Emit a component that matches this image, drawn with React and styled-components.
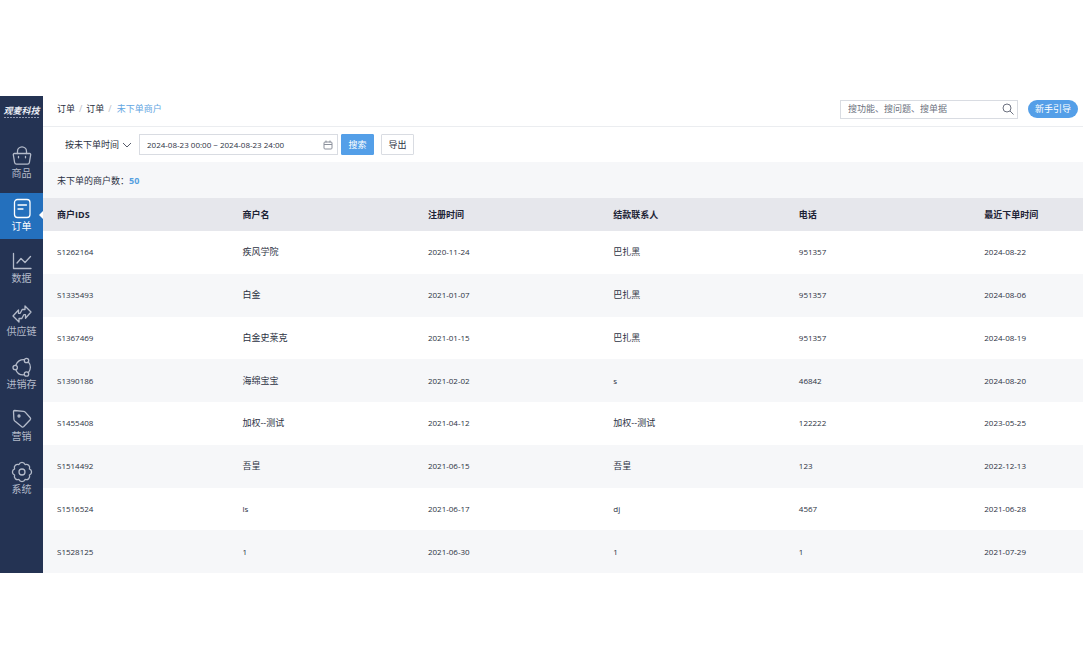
import React, { useState } from 'react';
import styled, { createGlobalStyle } from 'styled-components';

const GlobalStyle = createGlobalStyle`
  * {
    box-sizing: border-box;
  }
  body {
    margin: 0;
    background: #fff;
    color: #2b3142;
    font-family: "Open Sans", "Noto Sans CJK SC", sans-serif;
    font-size: 9px;
    line-height: 12px;
  }
  button, input, select {
    font: inherit;
    color: inherit;
  }
`;

const Page = styled.div`
  display: flex;
  margin: 96px 0;
`;

const Sidebar = styled.aside`
  display: flex;
  flex-direction: column;
  flex: 0 0 43px;
  background: #243353;
`;

const Logo = styled.a`
  height: 44px;
  padding-top: 9px;
  color: #e9ecf4;
  text-align: center;
  text-decoration: none;
  font-size: 9px;
  font-style: italic;
  font-weight: 700;
  white-space: nowrap;
`;

const Tagline = styled.svg`
  display: block;
  width: 35px;
  height: 2px;
  margin: 0 auto;
`;

const Nav = styled.nav`
  display: flex;
  flex: 1;
  flex-direction: column;
  justify-content: space-between;
  padding-bottom: 71px;
`;

const NavItem = styled.a`
  position: relative;
  display: flex;
  flex-direction: column;
  align-items: center;
  height: 46px;
  padding-top: 5px;
  background: ${props => props.$active ? '#2470bd' : 'transparent'};
  color: ${props => props.$active ? '#fff' : '#b4bbca'};
  font-size: 10px;
  line-height: 12px;
  text-decoration: none;
  white-space: nowrap;

  svg {
    width: 22px;
    height: 22px;
    fill: none;
    stroke: currentColor;
    stroke-width: 1.3;
    stroke-linecap: round;
    stroke-linejoin: round;
  }

  &::after {
    content: '';
    display: ${props => props.$active ? 'block' : 'none'};
    position: absolute;
    right: 0;
    top: 18px;
    border: 4px solid transparent;
    border-left: 0;
    border-right-color: #fff;
  }
`;

const Main = styled.main`
  flex: 1;
  min-width: 0;
`;

const TopBar = styled.header`
  display: flex;
  align-items: center;
  gap: 10px;
  height: 31px;
  padding: 0 5px 4px 14px;
  border-bottom: 1px solid #ebedf0;
`;

const Breadcrumb = styled.nav`
  display: flex;
  flex: 1;
  gap: 4px;
  color: #b9bdc6;

  a {
    color: #2b3142;
    text-decoration: none;
  }
  a[aria-current] {
    margin-left: 1px;
    color: #63a6e2;
  }
`;

const SearchBox = styled.label`
  display: flex;
  align-items: center;
  width: 178px;
  height: 19px;
  padding: 0 3px 0 7px;
  border: 1px solid #d9dce2;

  input {
    flex: 1;
    min-width: 0;
    padding: 0;
    border: 0;
    outline: 0;
    background: none;
  }
  input::placeholder {
    color: #6d7280;
    opacity: 1;
  }
  svg {
    width: 12px;
    height: 12px;
    fill: none;
    stroke: #6d7280;
  }
`;

const GuideButton = styled.button`
  width: 50px;
  height: 18px;
  padding: 0;
  border: 0;
  border-radius: 9px;
  background: #549fe8;
  color: #fff;
`;

const FilterBar = styled.form`
  display: flex;
  align-items: center;
  gap: 7px;
  height: 35px;
  padding: 0 22px;
`;

const TypeSelect = styled.div`
  display: flex;
  align-items: center;
  width: 67px;

  select {
    flex: 1;
    min-width: 0;
    padding: 0;
    border: 0;
    outline: 0;
    background: none;
    appearance: none;
  }
  svg {
    width: 10px;
    height: 10px;
    margin-left: -10px;
    fill: none;
    stroke: #555b69;
    pointer-events: none;
  }
`;

const DateBox = styled.label`
  display: flex;
  align-items: center;
  width: 199px;
  height: 21px;
  padding: 0 4px 0 7px;
  border: 1px solid #d9dce2;

  input {
    flex: 1;
    min-width: 0;
    padding: 0;
    border: 0;
    outline: 0;
    background: none;
    font-size: 8px;
  }
  svg {
    width: 10px;
    height: 10px;
    fill: none;
    stroke: #8b909b;
  }
`;

const Button = styled.button`
  width: 33px;
  height: 21px;
  padding: 0;
  border: 1px solid ${props => props.$primary ? '#549fe8' : '#d9dce2'};
  border-radius: 1px;
  background: ${props => props.$primary ? '#549fe8' : '#fff'};
  color: ${props => props.$primary ? '#fff' : '#2b3142'};
`;

const Buttons = styled.div`
  display: flex;
  gap: 7px;
  margin-left: -4px;
`;

const Summary = styled.div`
  display: flex;
  align-items: center;
  height: 36px;
  padding: 1px 14px 0;
  background: #f6f7f9;

  strong {
    color: #559fe0;
    font-weight: 700;
  }
`;

const TableScroll = styled.div`
  overflow-x: auto;
  scrollbar-width: none;
`;

const Table = styled.table`
  width: 107%;
  height: 375px;
  table-layout: fixed;
  border-collapse: collapse;

  th, td {
    padding: 0 14px;
    text-align: left;
  }
  th {
    height: 33px;
    background: #e6e7ec;
    color: #1d2335;
    font-weight: 700;
  }
  tbody tr:nth-child(even) {
    background: #f6f7f9;
  }
`;

const Cell = styled.td`
  font-size: ${props => props.$latin ? '8px' : '9px'};
`;

const BagIcon = () => (
  <svg viewBox="0 0 22 22">
    <path d="M3.300 8.500h15.400a1 1 0 0 1 1 1.200l-1.300 7.800a2 2 0 0 1-2 1.700H5.600a2 2 0 0 1-2-1.700L2.300 9.700a1 1 0 0 1 1-1.200z" />
    <path d="M6.500 8.500V6.300a4.500 4.500 0 0 1 9 0v2.200M7.500 11.500v1.300M14.500 11.500v1.300" />
  </svg>
);

const OrderIcon = () => (
  <svg viewBox="0 0 22 22">
    <rect x="3.500" y="1.500" width="15.500" height="18" rx="3" />
    <path d="M7 7h8.500M7 11h5" />
  </svg>
);

const ChartIcon = () => (
  <svg viewBox="0 0 22 22">
    <path d="M2.500 3.500v15h17.500M6 13l4-4.500 4 4L19.500 6.500" />
  </svg>
);

const SupplyIcon = () => (
  <svg viewBox="0 0 22 22">
    <path d="M2 13l5.500-6v3.300h1.700l2-3.800H14V3l6 6-5.500 6.200v-3.500h-1.700l-2 3.800H8V19z" />
  </svg>
);

const StockIcon = () => (
  <svg viewBox="0 0 22 22">
    <circle cx="4.200" cy="11.500" r="2.200" />
    <circle cx="15.500" cy="4.500" r="2.200" />
    <circle cx="15.500" cy="18" r="2.200" />
    <path d="M4.800 9.300a8 8 0 0 1 8.500-5.700M4.800 13.700a8 8 0 0 0 8.500 5M17.300 5.900a8 8 0 0 1 0 10.800" />
  </svg>
);

const TagIcon = () => (
  <svg viewBox="0 0 22 22">
    <path d="M3.500 2.500l9 .800q1 .1 1.700.800l5 5.600q.9 1 0 2l-6.400 6.800q-1 1-2 .2l-7-5.700q-.8-.7-.9-1.700l-.4-7.800q0-1 1-1z" />
    <circle cx="8" cy="8" r="1" />
  </svg>
);

const GearIcon = () => (
  <svg viewBox="0 0 22 22">
    <path d="M18.400 7.900a3.300 3.300 0 0 1 0 6.200a3.300 3.300 0 0 1-4.300 4.300a3.300 3.300 0 0 1-6.200 0a3.300 3.300 0 0 1-4.300-4.300a3.300 3.300 0 0 1 0-6.200a3.300 3.300 0 0 1 4.300-4.300a3.300 3.300 0 0 1 6.200 0a3.300 3.300 0 0 1 4.300 4.300z" />
    <circle cx="11" cy="11" r="3" />
  </svg>
);

const menu = [
  { name: '商品', icon: BagIcon },
  { name: '订单', icon: OrderIcon },
  { name: '数据', icon: ChartIcon },
  { name: '供应链', icon: SupplyIcon },
  { name: '进销存', icon: StockIcon },
  { name: '营销', icon: TagIcon },
  { name: '系统', icon: GearIcon },
];

const columns = ['商户IDS', '商户名', '注册时间', '结款联系人', '电话', '最近下单时间'];

const rows = [
  ['S1262164', '疾风学院', '2020-11-24', '巴扎黑', '951357', '2024-08-22'],
  ['S1335493', '白金', '2021-01-07', '巴扎黑', '951357', '2024-08-06'],
  ['S1367469', '白金史莱克', '2021-01-15', '巴扎黑', '951357', '2024-08-19'],
  ['S1390186', '海绵宝宝', '2021-02-02', 's', '46842', '2024-08-20'],
  ['S1455408', '加权--测试', '2021-04-12', '加权--测试', '122222', '2023-05-25'],
  ['S1514492', '吾皇', '2021-06-15', '吾皇', '123', '2022-12-13'],
  ['S1516524', 'ls', '2021-06-17', 'dj', '4567', '2021-06-28'],
  ['S1528125', '1', '2021-06-30', '1', '1', '2021-07-29'],
];

const isLatin = text => /^[\w-]+$/.test(text);

export default function App() {
  const [range, setRange] = useState('2024-08-23 00:00 ~ 2024-08-23 24:00');

  return (
    <>
      <GlobalStyle />
      <Page>
        <Sidebar>
          <Logo href="#">
            观麦科技
            <Tagline viewBox="0 0 35 2">
              <path d="M0 .500h35" stroke="#8f99b1" strokeDasharray="2 1" />
            </Tagline>
          </Logo>
          <Nav>
            {menu.map(({ name, icon: Icon }) => (
              <NavItem key={name} href="#" $active={name === '订单'}>
                <Icon />
                {name}
              </NavItem>
            ))}
          </Nav>
        </Sidebar>
        <Main>
          <TopBar>
            <Breadcrumb>
              <a href="#">订单</a>/
              <a href="#">订单</a>/
              <a href="#" aria-current="page">未下单商户</a>
            </Breadcrumb>
            <SearchBox>
              <input type="text" aria-label="搜索" placeholder="搜功能、搜问题、搜单据" />
              <svg viewBox="0 0 12 12">
                <circle cx="5" cy="5" r="4" />
                <path d="M8 8l3.500 3.500" />
              </svg>
            </SearchBox>
            <GuideButton type="button">新手引导</GuideButton>
          </TopBar>
          <FilterBar onSubmit={e => e.preventDefault()}>
            <TypeSelect>
              <select aria-label="时间类型">
                <option>按未下单时间</option>
              </select>
              <svg viewBox="0 0 10 10">
                <path d="M1 3l4 4 4-4" />
              </svg>
            </TypeSelect>
            <DateBox>
              <input type="text" aria-label="时间" value={range} onChange={e => setRange(e.target.value)} />
              <svg viewBox="0 0 10 10">
                <rect x="1" y="2" width="8" height="7" rx="1" />
                <path d="M1 4.500h8M3 .500v2M7 .500v2" />
              </svg>
            </DateBox>
            <Buttons>
              <Button type="submit" $primary>搜索</Button>
              <Button type="button">导出</Button>
            </Buttons>
          </FilterBar>
          <Summary>
            未下单的商户数：<strong>50</strong>
          </Summary>
          <TableScroll>
            <Table>
              <thead>
                <tr>
                  {columns.map(title => <th key={title} scope="col">{title}</th>)}
                </tr>
              </thead>
              <tbody>
                {rows.map(row => (
                  <tr key={row[0]}>
                    {row.map((text, i) => <Cell key={i} $latin={isLatin(text)}>{text}</Cell>)}
                  </tr>
                ))}
              </tbody>
            </Table>
          </TableScroll>
        </Main>
      </Page>
    </>
  );
}
